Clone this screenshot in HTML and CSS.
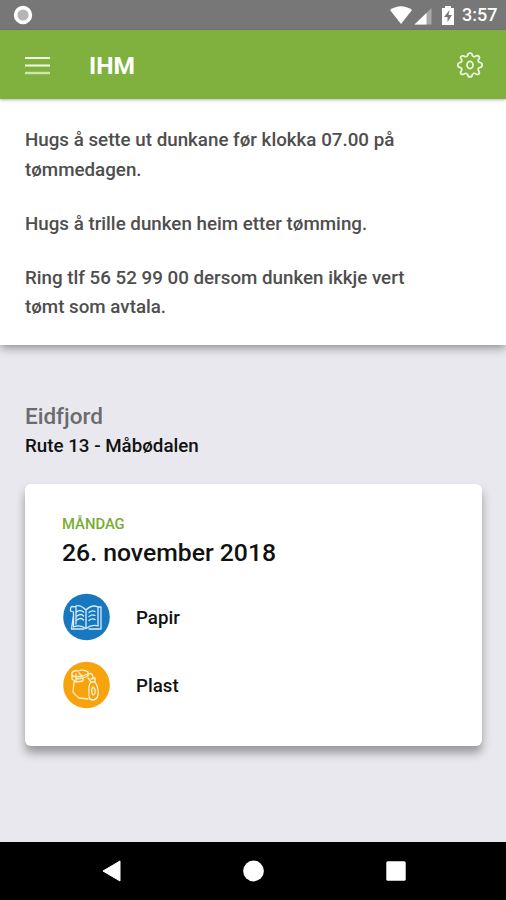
FILE: index.html
```html
<!DOCTYPE html>
<html lang="nn">
<head>
<meta charset="utf-8">
<title>IHM</title>
<link rel="stylesheet" href="styles.css">
</head>
<body>
<div class="status">
  <svg class="record" width="20" height="20" viewBox="0 0 20 20"><circle cx="10" cy="10" r="7.400" fill="#b5b5b5" stroke="#fff" stroke-width="3.600"/></svg>
  <svg width="76" height="28" viewBox="0 0 76 28" class="signals">
    <path d="M4 9Q15 1.500 26 9L15 23Z" fill="#fff"/>
    <path d="M45.500 7V23.500H28.500Z" fill="#a9a9a9"/>
    <path d="M40.500 12V23.500H28.500Z" fill="#fff"/>
    <path d="M56 7h3V5h6v2h3v17H56Z" fill="#fff"/>
    <path d="M63.500 9l-5.500 7h3.500v5l4.500-7H62.500Z" fill="#777"/>
  </svg>
  <span class="clock">3:57</span>
</div>
<header class="appbar">
  <svg width="26" height="20" viewBox="0 0 26 20"><path d="M0 2H25M0 9.500H25" stroke="#f3fae8" stroke-width="2"/><path d="M0 17H25" stroke="#cfe4b1" stroke-width="2.400"/></svg>
  <h1>IHM</h1>
  <svg class="gear" width="28" height="28" viewBox="0 0 28 28" fill="none" stroke="#eef8df" stroke-width="1.700" stroke-linejoin="round"><path d="M11.600 4.600Q11.800 2 14 2T16.400 4.600Q18 6.700 19.900 5Q21.800 4 23 5.500T22.400 8.500Q21.600 11 24 11.500Q26.200 12 26.200 14T24 16.500Q21.600 17 22.400 19.500Q24 21.500 23 22.800T19.900 23Q18 21.300 16.400 23.400Q16.200 26 14 26T11.600 23.400Q10 21.300 8.100 23Q6.200 24 5 22.800T5.600 19.500Q6.400 17 4 16.500Q1.800 16 1.800 14T4 11.500Q6.400 11 5.600 8.500Q4 6.500 5 5.500T8.100 5Q10 6.700 11.600 4.600Z"/><ellipse cx="14" cy="14" rx="3" ry="3.600"/></svg>
</header>
<section class="notice">
  <p>Hugs å sette ut dunkane før klokka 07.00 på<br>tømmedagen.</p>
  <p>Hugs å trille dunken heim etter tømming.</p>
  <p>Ring tlf 56 52 99 00 dersom dunken ikkje vert<br>tømt som avtala.</p>
</section>
<main>
  <h2>Eidfjord</h2>
  <div class="route">Rute 13 - Måbødalen</div>
  <article class="card">
    <div class="day">MÅNDAG</div>
    <div class="date">26. november 2018</div>
    <div class="item">
      <svg width="48" height="48" viewBox="0 0 48 48" fill="none" stroke="#d8edfa" stroke-width="1.300" stroke-linejoin="round" stroke-linecap="round"><circle cx="24.500" cy="24" r="23.300" fill="#1878be" stroke="none"/><path d="M24 17Q17 10 12 14Q8 12 8.500 18L11.500 19V34Q18 31 24 35.500V17Q30 11 36 14V33Q30 31 24 35.500M36 14H39V36H27M11.500 22L9.500 36H22M14 14V31M14.500 19Q18 16 21.500 19M15 23Q19 20 21.500 23M15 27Q19 24 21.500 27M27 19.500Q30 17 33 18.500M27 23.500Q30 21 33 22.500M27 27.500Q30 25 33 26.500"/></svg>
      <span>Papir</span>
    </div>
    <div class="item">
      <svg width="48" height="48" viewBox="0 0 48 48" fill="none" stroke="#fff0d0" stroke-width="1.300" stroke-linejoin="round" stroke-linecap="round"><circle cx="24.500" cy="24" r="23.300" fill="#f7a30d" stroke="none"/><path d="M10 12Q11 9 16 10Q22 8 26 11V15L21 17V20L14 21L10 18ZM10 15Q18 17 26 13M14 13V20M14 18L21 17M17 12L20 15M12 21L11 31Q13 34 17 37L26 38M26 17L29 21M26 13Q31 11 31 17M29 18L33 17V21Q37 27 36 34Q35 39 30 39Q26 38 27 31Q26 25 29 21H33M31 26Q34 28 33 32Q31 36 30 32Q29 28 31 26"/></svg>
      <span>Plast</span>
    </div>
  </article>
</main>
<nav class="navbar">
  <svg width="20" height="22" viewBox="0 0 20 22"><path d="M1 11L18 1V21Z" fill="#fff" stroke="#fff" stroke-linejoin="round"/></svg>
  <svg width="22" height="22" viewBox="0 0 22 22"><circle cx="10.500" cy="11" r="10.400" fill="#fff"/></svg>
  <svg width="20" height="20" viewBox="0 0 20 20"><rect x=".3" y=".3" width="19.400" height="19.400" rx="1.500" fill="#fff"/></svg>
</nav>
</body>
</html>
```

FILE: styles.css
```css
* { box-sizing: border-box; }
body {
  margin: 0;
  width: 506px;
  height: 900px;
  overflow: hidden;
  display: flex;
  flex-direction: column;
  background: #e9e8ee;
  font-family: Roboto, "Liberation Sans", sans-serif;
  font-weight: 500;
  color: #111;
}
svg { display: block; flex: none; }
h1, h2, p { margin: 0; }
.status {
  height: 30px;
  flex: none;
  display: flex;
  align-items: center;
  padding: 0 9px 0 13px;
  background: #777;
}
.signals { margin-left: auto; }
.clock { color: #fff; font-size: 18px; line-height: 30px; width: 35px; white-space: nowrap; }
.appbar {
  height: 69px;
  flex: none;
  display: flex;
  align-items: center;
  padding: 2px 22px 0 25px;
  background: #80b13f;
  box-shadow: 0 1px 3px rgba(0, 0, 0, .3);
  position: relative;
}
.appbar h1 { margin-left: 38px; font-size: 24.500px; line-height: 30px; font-weight: 700; color: #fff; }
.gear { margin: 0 0 2px auto; }
.notice {
  height: 246px;
  flex: none;
  padding: 27px 25px 0;
  background: #fff;
  color: #4e4e4e;
  font-size: 18.750px;
  line-height: 29.500px;
  box-shadow: 0 2px 10px rgba(0, 0, 0, .45);
}
.notice p { margin-bottom: 24.500px; white-space: nowrap; }
main { flex: 1; padding: 57px 24px 0 25px; }
h2 { font-size: 22.500px; line-height: 28px; font-weight: 500; color: #6b6b6e; }
.route { margin-top: 1px; font-size: 18.750px; line-height: 30px; }
.card {
  margin-top: 23px;
  height: 262px;
  padding: 31px 37px 0;
  background: #fff;
  border-radius: 6px;
  box-shadow: 0 7px 10px rgba(0, 0, 0, .35);
}
.day { font-size: 14.800px; line-height: 19px; color: #78ac32; }
.date { font-size: 24.750px; line-height: 38px; margin-bottom: 21px; }
.item { display: flex; align-items: center; gap: 26px; height: 48px; margin-bottom: 20px; font-size: 18.700px; }
.item span { padding-top: 2px; }
.navbar {
  height: 58px;
  flex: none;
  display: flex;
  align-items: center;
  justify-content: space-between;
  padding: 0 100px 0 102px;
  background: #000;
}
```
